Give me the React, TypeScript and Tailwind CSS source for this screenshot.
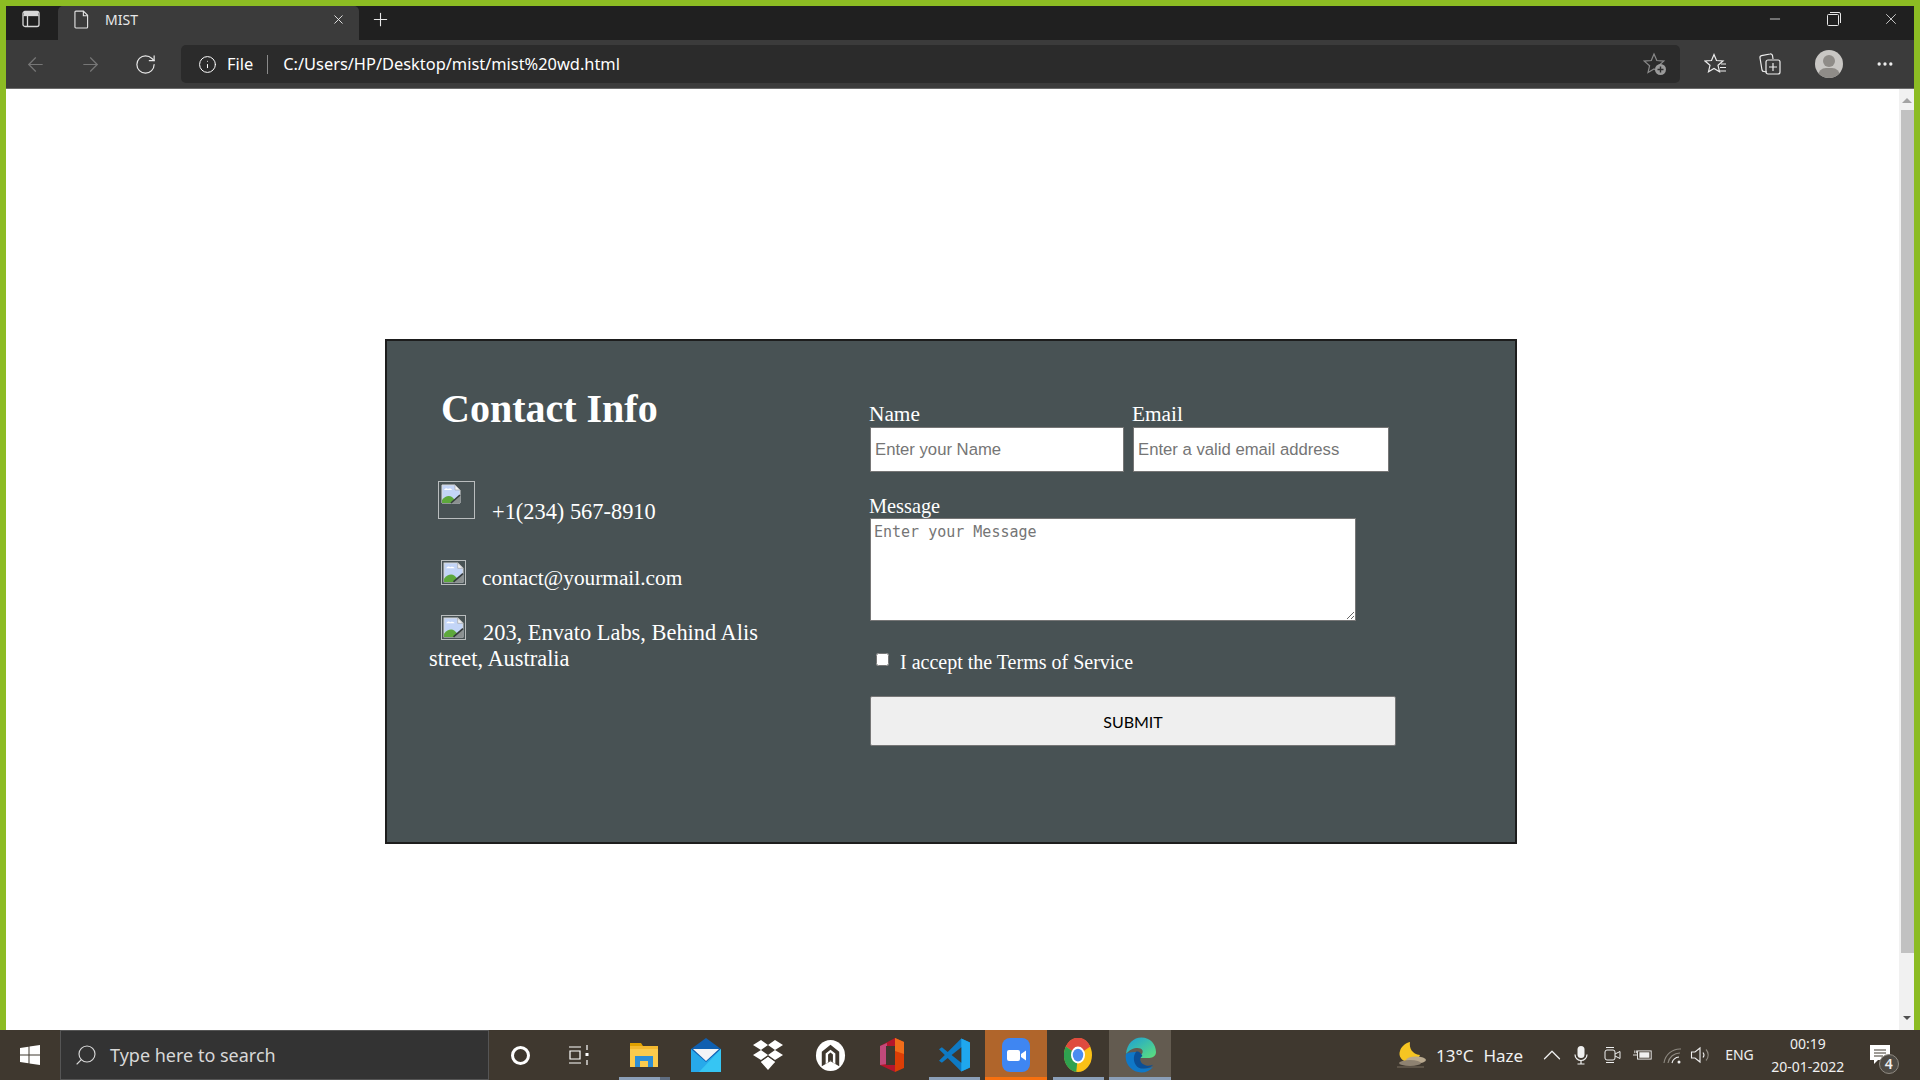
import React from 'react';
import { ArrowLeft, ArrowRight, RotateCw, Info, Plus, X, Minus, ChevronUp, Search, MoreHorizontal } from 'lucide-react';

const BrokenImage: React.FC<{ box: string; iconClass?: string }> = ({ box, iconClass = 'w-[20px] h-[20px] m-[2px]' }) => (
  <span className={`inline-block align-baseline border border-[#b9bdbe] ${box}`}>
    <svg viewBox="0 0 20 20" className={`block ${iconClass}`}>
      <path d="M1 1h13l5 5v13H1z" fill="#c3d5f7" stroke="#d8dadb" strokeWidth="1" />
      <path d="M14 1v5h5z" fill="#f3f3f3" stroke="#a0a0a0" strokeWidth="0.6" />
      <path d="M3 6c1-2 3-2 4-1 2-1 4 0 4 1z" fill="#fff" />
      <path d="M1 19v-3c3-4 7-5 10-3l3 3-3 3z" fill="#5da83c" />
      <path d="M11 19l8-8v8z" fill="#8a8f8f" />
      <path d="M10 19l9-8" stroke="#353b3c" strokeWidth="1.6" />
    </svg>
  </span>
);

const FolderIcon = () => (
  <svg viewBox="0 0 28 26" className="w-[28px] h-[26px]">
    <path d="M0 1h11l2 3H0z" fill="#e0a100" />
    <path d="M0 4h28v21H0z" fill="#fbcb4c" />
    <path d="M0 4h28v3H0z" fill="#f4b92f" />
    <path d="M5 25v-11h18v11h-5v-6h-8v6z" fill="#2d8fd5" />
  </svg>
);

const MailIcon = () => (
  <svg viewBox="0 0 30 34" className="w-[30px] h-[34px]">
    <path d="M15 0 30 11v23H0V11z" fill="#0f5fb0" />
    <path d="M2 11h26L15 23z" fill="#f2f4f6" />
    <path d="M0 11l15 13 15-13v23H0z" fill="#27a9ea" />
    <path d="M30 11v23H8z" fill="#36c5f3" />
  </svg>
);

const DropboxIcon = () => (
  <svg viewBox="0 0 30 32" className="w-[30px] h-[32px]" fill="#fff">
    <path d="M8 1l7 5-7 5-8-5zM22 1l8 5-8 5-7-5zM0 16l8-5 7 5-7 5zM30 16l-8-5-7 5 7 5zM15 18l7 5-7 8-7-8z" />
    <path d="M8 23l7 5 7-5-7-5z" />
  </svg>
);

const ArchIcon = () => (
  <svg viewBox="0 0 32 32" className="w-[31px] h-[31px]">
    <ellipse cx="16" cy="16" rx="15" ry="16" fill="#fff" />
    <path d="M7 27V12l9-7 9 7v15l-9-5z" fill="#3f382f" />
    <path d="M11 25V14l5-4 5 4v11l-5-4z" fill="#fff" />
    <path d="M13.500 23V15l2.500-2 2.500 2v8l-2.500-2z" fill="#3f382f" />
  </svg>
);

const OfficeIcon = () => (
  <svg viewBox="0 0 24 34" className="w-[24px] h-[34px]">
    <path d="M0 8 15 0v34L0 27z" fill="#b5162c" />
    <path d="M15 0l9 4v26l-9 4z" fill="#dc3e06" />
    <path d="M15 0l9 4v12l-9-3z" fill="#f06d1a" />
    <path d="M0 8l7-3v21l-7 1z" fill="#c2497a" />
    <path d="M6 8h9v19H6z" fill="#3f382f" />
  </svg>
);

const VscodeIcon = () => (
  <svg viewBox="0 0 32 36" className="w-[31px] h-[36px]">
    <path d="M23 1 9 15 3 10 0 12l6 6-6 6 3 2 6-5 14 14 9-4V5z" fill="#0e7ac4" />
    <path d="M23 1l9 4v26l-9 4z" fill="#1fa7ee" />
    <path d="M23 10v16l-10-8z" fill="#3f382f" />
  </svg>
);

const ZoomIcon = () => (
  <svg viewBox="0 0 28 34" className="w-[28px] h-[34px]">
    <rect width="28" height="34" rx="8" fill="#3f86f2" />
    <rect x="5" y="12" width="13" height="11" rx="2" fill="#fff" />
    <path d="M19 16l5-3.500v10L19 19z" fill="#fff" />
  </svg>
);

const ChromeIcon = () => (
  <svg viewBox="0 0 32 32" className="w-[28px] h-[34px]" preserveAspectRatio="none">
    <circle cx="16" cy="16" r="16" fill="#fbc116" />
    <path d="M16 16 2 8A16 16 0 0 1 30 8z" fill="#df4b3f" />
    <path d="M16 16 2 8A16 16 0 0 0 14 32z" fill="#2fa14f" />
    <circle cx="16" cy="16" r="8" fill="#fff" />
    <circle cx="16" cy="16" r="6" fill="#4a8cf0" />
  </svg>
);

const EdgeIcon = () => (
  <svg viewBox="0 0 32 36" className="w-[31px] h-[36px]">
    <defs>
      <linearGradient id="edgeTop" x1="0" y1="0" x2="1" y2="1">
        <stop offset="0" stopColor="#1a9fd8" />
        <stop offset="1" stopColor="#5fe07a" />
      </linearGradient>
    </defs>
    <path d="M1 17C2 6 9 0 17 0c9 0 15 7 15 15 0 4-3 6-7 6h-8c-2 0-3-1-3-2 3-1 5-3 4-6-2-4-12-3-17 4z" fill="url(#edgeTop)" />
    <path d="M1 17c-2 10 6 19 16 19 5 0 9-2 12-6-6 3-13 2-16-2-3-4-2-10 1-13-5 0-10 0-13 2z" fill="#0f78c8" />
    <path d="M12 14c-3 3-4 9-1 14 2 4 8 5 14 3 2-1 3-2 4-3-4 2-8 1-11-1-3-3-3-6 0-8-1-2-3-5-6-5z" fill="#0b4f96" />
  </svg>
);

const MoonIcon = () => (
  <svg viewBox="0 0 30 26" className="w-[30px] h-[26px]">
    <path d="M13 0c-1 6 2 12 10 13-2 5-7 8-13 7C5 19 1 14 3 9c1-4 5-8 10-9z" fill="#f6c522" />
    <ellipse cx="19" cy="18" rx="10" ry="3.500" fill="#b9a98e" />
    <ellipse cx="13" cy="21" rx="11" ry="3" fill="#8e8271" />
    <path d="M0 25h27" stroke="#7a6f60" strokeWidth="1" />
  </svg>
);

const TaskSlot: React.FC<{ children: React.ReactNode; bar?: string; bg?: string }> = ({ children, bar, bg }) => (
  <div className={`relative w-[62px] h-full flex items-center justify-center ${bg ?? ''}`}>
    {children}
    {bar && <span className={`absolute bottom-0 h-[3px] ${bar}`} />}
  </div>
);

const ContactInfo = () => (
  <div className="w-[483px] pl-[42px] pt-[45px] text-white text-[22.4px] leading-[26px]">
    <h1 className="ml-[12px] text-[40px] leading-[45px] font-bold">Contact Info</h1>
    <p className="mt-[50px] ml-[9px]">
      <BrokenImage box="w-[37px] h-[38px] mr-[17px]" />
      +1(234) 567-8910
    </p>
    <p className="mt-[35px] ml-[12px] text-[21.33px]">
      <BrokenImage box="w-[25px] h-[25px] mr-[16px]" iconClass="w-[21px] h-[21px] m-[1px]" />
      contact@yourmail.com
    </p>
    <p className="mt-[24px] w-[340px]">
      <BrokenImage box="w-[25px] h-[25px] ml-[12px] mr-[17px]" iconClass="w-[21px] h-[21px] m-[1px]" />
      203, Envato Labs, Behind Alis street, Australia
    </p>
  </div>
);

const ContactForm = () => (
  <form className="flex-1 text-white text-[20px] leading-[23px] pt-[61px]">
    <div className="flex">
      <label className="w-[263px] flex flex-col items-start">
        <span className="-ml-px text-[21.33px] leading-[25px]">Name</span>
        <input
          type="text"
          placeholder="Enter your Name"
          className="w-[254px] h-[45px] bg-white border border-[#767676] px-[4px] text-[16.7px] font-['Liberation_Sans',sans-serif] text-black placeholder:text-[#757575]"
        />
      </label>
      <label className="flex flex-col items-start">
        <span className="-ml-px text-[21.33px] leading-[25px]">Email</span>
        <input
          type="email"
          placeholder="Enter a valid email address"
          className="w-[256px] h-[45px] bg-white border border-[#767676] px-[4px] text-[16.7px] font-['Liberation_Sans',sans-serif] text-black placeholder:text-[#757575]"
        />
      </label>
    </div>
    <label className="mt-[23px] flex flex-col items-start">
      <span className="-ml-px text-[20.33px]">Message</span>
      <textarea
        placeholder="Enter your Message"
        className="block w-[486px] h-[103px] bg-white border border-[#767676] px-[3px] pt-[4px] text-[15px] leading-[18px] font-['DejaVu_Sans_Mono',monospace] text-black placeholder:text-[#757575]"
      />
    </label>
    <label className="mt-[20px] h-[27px] flex items-start pl-[6px]">
      <input type="checkbox" className="mt-[12px] w-[13px] h-[13px]" />
      <span className="ml-[11px] mt-[10px]">I accept the Terms of Service</span>
    </label>
    <button
      type="button"
      className="mt-[28px] block w-[526px] h-[50px] bg-[#efefef] border border-[#767676] rounded-[2px] text-black text-[16px] font-['Lato',sans-serif]"
    >
      SUBMIT
    </button>
  </form>
);

export default function App() {
  return (
    <div className="w-[1920px] h-[1080px] overflow-hidden flex flex-col bg-[#8cbc23] font-['Liberation_Serif',serif]">
      <div className="h-[6px]" />
      <div className="flex-1 min-h-0 mx-[6px] flex flex-col font-['Noto_Sans',sans-serif]">
        {/* tab strip */}
        <div className="h-[34px] bg-[#202020] flex text-[#e8e8e8]">
          <div className="w-[52px] h-full flex items-center justify-center pb-[8px] pr-[3px]">
            <svg viewBox="0 0 18 18" className="w-[18px] h-[18px]" fill="none" stroke="#d8d8d8" strokeWidth="1.300">
              <rect x="1" y="1.500" width="16" height="15" rx="2" />
              <path d="M1.500 5.500h15" />
              <path d="M2 2h14v3.500H2z" fill="#d8d8d8" stroke="none" />
              <path d="M5.500 5.500v10.500" />
            </svg>
          </div>
          <div className="w-[301px] h-full bg-[#3b3b3b] rounded-t-[5px] flex items-center pl-[16px] pr-[13px] pb-[8px]">
            <svg viewBox="0 0 16 20" className="w-[15px] h-[19px]" fill="none" stroke="#e4e4e4" strokeWidth="1.200">
              <path d="M2 1h8l4.500 4.500V18a1 1 0 0 1-1 1H2a1 1 0 0 1-1-1V2a1 1 0 0 1 1-1z" />
              <path d="M10 1v5h4.500" />
            </svg>
            <span className="ml-[16px] text-[14px]">MIST</span>
            <X className="ml-auto w-[15px] h-[15px]" strokeWidth={1.500} />
          </div>
          <div className="ml-[11px] pb-[8px] flex items-center">
            <Plus className="w-[21px] h-[21px]" strokeWidth={1.250} />
          </div>
          <div className="ml-auto flex items-center pr-[14px] pb-[8px]">
            <Minus className="mr-px w-[16px] h-[16px]" strokeWidth={1.250} />
            <svg viewBox="0 0 14 14" className="ml-[43px] w-[14px] h-[14px]" fill="none" stroke="#e8e8e8" strokeWidth="1">
              <rect x="0.500" y="2.500" width="11" height="11" rx="1" />
              <path d="M3 .5h9a1.500 1.500 0 0 1 1.500 1.500v9" />
            </svg>
            <X className="ml-[41px] w-[18px] h-[18px]" strokeWidth={1.100} />
          </div>
        </div>
        {/* address bar */}
        <div className="h-[48px] bg-[#3b3b3b] flex items-center text-white">
          <ArrowLeft className="ml-[18px] w-[23px] h-[23px] text-[#767676]" strokeWidth={1.250} />
          <ArrowRight className="ml-[32px] w-[23px] h-[23px] text-[#767676]" strokeWidth={1.250} />
          <RotateCw className="ml-[32px] w-[23px] h-[23px] text-[#e8e8e8]" strokeWidth={1.250} />
          <div className="ml-[24px] w-[1499px] h-[38px] rounded-[5px] bg-[#2b2b2b] flex items-center pl-[17px] pr-[13px]">
            <Info className="w-[19px] h-[19px]" strokeWidth={1.250} />
            <span className="ml-[10px] text-[16.4px]">File</span>
            <span className="ml-[14px] w-px h-[19px] bg-[#8a8a8a]" />
            <span className="ml-[15px] text-[16.4px]">C:/Users/HP/Desktop/mist/mist%20wd.html</span>
            <svg viewBox="0 0 24 24" className="ml-auto w-[24px] h-[24px]" fill="none">
              <path d="M11 2l2.800 6.500 7 .6-5.300 4.600 1.600 6.800L11 17l-6 3.500 1.600-6.800L1.300 9.100l7-.6z" stroke="#8a8a8a" strokeWidth="1.200" />
              <circle cx="17.500" cy="17.500" r="5.500" fill="#9a9a9a" />
              <path d="M17.500 14.500v6M14.500 17.500h6" stroke="#2b2b2b" strokeWidth="1.400" />
            </svg>
          </div>
          <svg viewBox="0 0 24 24" className="ml-[24px] w-[24px] h-[24px]" fill="none" stroke="#ededed" strokeWidth="1.200">
            <path d="M10 2.500l2.500 6 6.500.5-5 4.300 1.500 6.400-5.500-3.300-5.500 3.300 1.500-6.400-5-4.300 6.500-.5z" />
            <path d="M17 12h5M16 15.500h6M15.500 19h6.500" />
          </svg>
          <svg viewBox="0 0 24 24" className="ml-[30px] w-[24px] h-[24px]" fill="none" stroke="#ededed" strokeWidth="1.200">
            <path d="M9 20l-3-.5a2 2 0 0 1-2-1.500L2 6a2 2 0 0 1 1.500-2.300L12 2a2 2 0 0 1 2.500 1.500L15 7" />
            <rect x="8" y="8" width="14" height="14" rx="2" />
            <path d="M15 11v8M11 15h8" />
          </svg>
          <div className="ml-[33px] w-[28px] h-[28px] rounded-full bg-[#c9c7c4] overflow-hidden relative">
            <span className="absolute left-[8px] top-[5px] w-[12px] h-[12px] rounded-full bg-[#8f8c88]" />
            <span className="absolute left-[3px] top-[18px] w-[22px] h-[16px] rounded-full bg-[#8f8c88]" />
          </div>
          <MoreHorizontal className="ml-[32px] w-[20px] h-[20px] text-[#ededed]" strokeWidth={2} />
        </div>
        <div className="h-px bg-[#6b6b6b]" />
        {/* page */}
        <div className="flex-1 min-h-0 flex bg-white font-['Liberation_Serif',serif]">
          <div className="flex-1 pt-[250px] pl-[379px]">
            <div className="w-[1132px] h-[505px] bg-[#485254] border-2 border-[#1d1d1d] flex">
              <ContactInfo />
              <ContactForm />
            </div>
          </div>
          <div className="w-[15px] bg-[#f1f1f1] flex flex-col items-center">
            <span className="mt-[9px] w-0 h-0 border-x-[5px] border-x-transparent border-b-[5px] border-b-[#a3a3a3]" />
            <span className="mt-[7px] w-[13px] h-[843px] ml-[2px] bg-[#c1c1c1]" />
            <span className="mt-[63px] w-0 h-0 border-x-[4px] border-x-transparent border-t-[4px] border-t-[#505050]" />
          </div>
        </div>
      </div>
      {/* taskbar */}
      <div className="h-[50px] bg-[#3f382f] flex items-center text-white font-['Noto_Sans',sans-serif]">
        <div className="w-[60px] h-full flex items-center justify-center">
          <svg viewBox="0 0 20 20" className="w-[20px] h-[20px]" fill="#fff">
            <path d="M0 3l8.500-1.200V9.500H0zM9.500 1.600 20 0v9.500H9.500zM0 10.500h8.500v7.700L0 17zM9.500 10.500H20V20L9.500 18.400z" />
          </svg>
        </div>
        <div className="w-[429px] h-full bg-[#333333] border border-[#555555] flex items-center pl-[13px] text-[#d8d8d8]">
          <Search className="w-[24px] h-[24px] -scale-x-100" strokeWidth={1.150} />
          <span className="ml-[12px] text-[18px]">Type here to search</span>
        </div>
        <TaskSlot>
          <span className="w-[19px] h-[19px] rounded-full border-[3px] border-white" />
        </TaskSlot>
        <TaskSlot>
          <svg viewBox="0 0 22 22" className="w-[22px] h-[22px] -translate-x-[3px]" fill="none" stroke="#fff" strokeWidth="1.200">
            <path d="M1 3h12M1 19h12M2 7h10v8H2zM19 1v5M19 16v5" />
            <rect x="17.500" y="9" width="3" height="3" fill="#fff" stroke="none" />
          </svg>
        </TaskSlot>
        <TaskSlot bar="left-[6px] right-[5px] bg-[linear-gradient(90deg,#8b9fb8_80%,#5f6d80_80%)]"><FolderIcon /></TaskSlot>
        <TaskSlot><MailIcon /></TaskSlot>
        <TaskSlot><DropboxIcon /></TaskSlot>
        <TaskSlot><ArchIcon /></TaskSlot>
        <TaskSlot><OfficeIcon /></TaskSlot>
        <TaskSlot bar="left-[6px] right-[5px] bg-[#8b9fb8]"><VscodeIcon /></TaskSlot>
        <TaskSlot bg="bg-[#b0652b]" bar="left-0 right-0 bg-[#f7700f]"><ZoomIcon /></TaskSlot>
        <TaskSlot bar="left-[6px] right-[5px] bg-[#8b9fb8]"><ChromeIcon /></TaskSlot>
        <TaskSlot bg="bg-[#635b50]" bar="left-0 right-0 bg-[#8b9fb8]"><EdgeIcon /></TaskSlot>
        <div className="flex-1 flex items-center text-[#f0f0f0]">
          <div className="ml-[226px]"><MoonIcon /></div>
          <span className="ml-[9px] text-[17px] leading-none">13°C</span>
          <span className="ml-[10px] text-[17px] leading-none">Haze</span>
          <ChevronUp className="ml-[14px] -mr-[5px] w-[30px] h-[30px]" strokeWidth={1} />
          <svg viewBox="0 0 20 20" className="ml-[9px] w-[20px] h-[20px]" fill="none" stroke="#f0f0f0" strokeWidth="1.200">
            <rect x="6.500" y="1" width="7" height="12" rx="3.500" fill="#f0f0f0" stroke="none" />
            <path d="M4 9.500a6 6 0 0 0 12 0M10 15.500V19M6.500 19h7" />
          </svg>
          <svg viewBox="0 0 20 20" className="ml-[12px] w-[20px] h-[20px]" fill="none" stroke="#f0f0f0" strokeWidth="1">
            <rect x="2" y="5" width="10" height="10" rx="2" />
            <path d="M12 9l5-2.500v7L12 11M3 2.500h8M3 17.500h8" />
          </svg>
          <svg viewBox="0 0 22 14" className="ml-[10px] w-[20px] h-[14px]" fill="none" stroke="#f0f0f0" strokeWidth="1">
            <rect x="5" y="2.500" width="15" height="9" />
            <rect x="7" y="4" width="11" height="6" fill="#f0f0f0" stroke="none" />
            <path d="M0 7h5M2 2v3M4 2v3" />
          </svg>
          <svg viewBox="0 0 20 20" className="ml-[10px] w-[20px] h-[20px]" fill="none" stroke="#8f8a82" strokeWidth="1.100">
            <path d="M1 18a16 16 0 0 1 17-14M5 18a12 12 0 0 1 12-10" />
            <path d="M9 18a8 8 0 0 1 7-6" stroke="#f0f0f0" />
            <circle cx="16" cy="17" r="1.500" fill="#f0f0f0" stroke="none" />
          </svg>
          <svg viewBox="0 0 22 20" className="ml-[7px] w-[22px] h-[20px]" fill="none" stroke="#f0f0f0" strokeWidth="1.100">
            <path d="M1.500 7h3.500l5-4v14l-5-4H1.500z" />
            <path d="M13 7.500a4 4 0 0 1 0 5" />
            <path d="M16 4.500a8 8 0 0 1 0 11" stroke="#8f8a82" />
          </svg>
          <span className="ml-[13px] text-[14px] leading-none">ENG</span>
          <div className="ml-[14px] w-[80px] flex flex-col items-center text-[14px] leading-[23px]">
            <span>00:19</span>
            <span>20-01-2022</span>
          </div>
          <div className="relative ml-[22px] w-[20px] h-[20px]">
            <svg viewBox="0 0 20 20" className="w-[20px] h-[20px]" fill="#fff">
              <path d="M0 0h20v15H8l-4 4v-4H0z" />
              <path d="M4 5h12M4 8h12M4 11h9" stroke="#3f382f" strokeWidth="1" />
            </svg>
            <span className="absolute left-[9px] top-[9px] w-[20px] h-[20px] rounded-full bg-[#4e4a44] border border-[#8f8a82] flex items-center justify-center text-[14px] font-semibold leading-none">4</span>
          </div>
        </div>
      </div>
    </div>
  );
}
